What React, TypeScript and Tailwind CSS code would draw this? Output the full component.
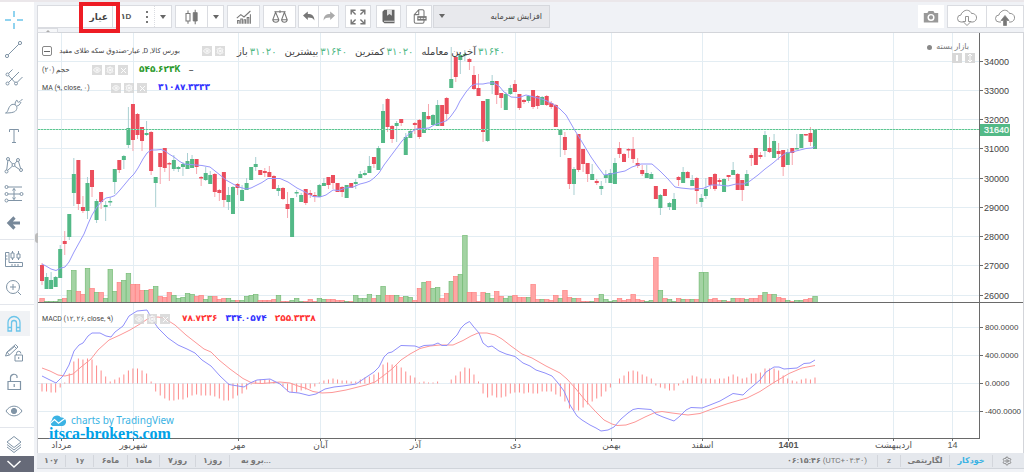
import type { ReactNode } from 'react'
import { Settings, Eye, X } from 'lucide-react'

type Direction = 'u' | 'd'
/** direction, high, body top, body bottom, low */
type Candle = [Direction, number, number, number, number]

const X0 = 42
const STEP = 4.547
const VOLUME_BASE = 302
const MACD_ZERO = 383.5

const xAt = (i: number) => X0 + i * STEP

const candles: Candle[] = [
  ['d', 263, 265, 281, 285], ['u', 273, 277, 289, 289], ['u', 272, 280, 289, 289], ['u', 276, 277, 287, 287],
  ['u', 245, 249, 278, 278], ['d', 231, 241, 244, 255], ['u', 214, 214, 237, 240], ['u', 158, 174, 193, 206],
  ['d', 160, 160, 204, 210], ['d', 196, 207, 211, 213], ['u', 177, 183, 211, 219], ['d', 170, 170, 187, 197],
  ['u', 199, 201, 220, 223], ['d', 192, 192, 202, 209], ['u', 201, 205, 207, 221], ['u', 197, 201, 202, 206],
  ['u', 169, 169, 182, 194], ['d', 160, 160, 170, 173], ['u', 155, 156, 160, 169], ['u', 107, 128, 145, 148],
  ['d', 104, 104, 140, 151], ['d', 113, 114, 135, 139], ['d', 127, 127, 141, 151], ['u', 121, 133, 135, 136],
  ['d', 131, 132, 171, 175], ['u', 177, 177, 183, 207], ['d', 153, 153, 167, 184], ['d', 148, 148, 168, 172],
  ['d', 162, 163, 164, 181], ['u', 155, 160, 169, 171], ['u', 166, 167, 169, 172], ['u', 162, 164, 167, 176],
  ['u', 153, 161, 169, 169], ['u', 155, 159, 168, 168], ['d', 159, 159, 167, 174], ['d', 176, 177, 178, 186],
  ['u', 167, 173, 180, 181], ['u', 171, 175, 184, 184], ['d', 173, 174, 192, 197], ['d', 189, 190, 193, 201],
  ['d', 172, 172, 200, 207], ['u', 187, 195, 202, 210], ['u', 186, 187, 214, 214], ['d', 183, 184, 188, 195],
  ['u', 185, 190, 201, 201], ['u', 178, 183, 190, 190], ['u', 167, 167, 180, 180], ['u', 157, 164, 167, 171],
  ['d', 170, 170, 175, 175], ['d', 168, 171, 173, 177], ['d', 166, 172, 177, 177], ['d', 175, 176, 189, 189],
  ['u', 185, 188, 191, 196], ['d', 187, 188, 199, 200], ['d', 192, 204, 209, 218], ['u', 198, 198, 237, 237],
  ['u', 190, 192, 193, 197], ['u', 193, 195, 202, 202], ['d', 189, 189, 203, 205], ['d', 190, 193, 195, 198],
  ['d', 192, 195, 196, 202], ['u', 184, 185, 197, 197], ['u', 178, 183, 186, 186], ['d', 177, 177, 185, 189],
  ['d', 175, 175, 183, 189], ['d', 183, 183, 192, 192], ['d', 186, 187, 192, 197], ['u', 185, 185, 198, 198],
  ['d', 183, 183, 188, 188], ['u', 179, 182, 184, 189], ['u', 171, 174, 178, 178], ['u', 170, 173, 175, 176],
  ['u', 156, 166, 173, 173], ['d', 157, 157, 164, 168], ['u', 146, 148, 170, 170], ['u', 104, 111, 143, 143],
  ['d', 98, 99, 127, 132], ['d', 125, 126, 139, 143], ['u', 121, 123, 126, 142], ['d', 119, 119, 123, 126],
  ['u', 133, 137, 155, 155], ['u', 130, 131, 138, 138], ['d', 122, 123, 125, 134], ['d', 119, 120, 137, 139],
  ['u', 112, 112, 133, 133], ['d', 104, 116, 119, 120], ['u', 114, 115, 125, 125], ['u', 100, 105, 126, 126],
  ['d', 105, 105, 126, 126], ['d', 97, 98, 114, 121], ['u', 47, 79, 88, 88], ['d', 57, 57, 77, 82],
  ['u', 53, 55, 60, 74], ['u', 50, 54, 55, 61], ['d', 58, 59, 62, 70], ['d', 66, 75, 89, 90],
  ['d', 74, 88, 96, 96], ['d', 101, 101, 132, 142], ['u', 99, 99, 141, 142], ['u', 75, 81, 85, 94],
  ['d', 81, 81, 95, 104], ['d', 93, 93, 98, 108], ['u', 92, 94, 110, 110], ['u', 85, 88, 94, 95],
  ['d', 80, 84, 92, 92], ['d', 94, 94, 108, 110], ['d', 99, 100, 102, 104], ['u', 95, 96, 101, 103],
  ['d', 90, 90, 107, 109], ['d', 95, 96, 106, 109], ['u', 96, 97, 105, 105], ['d', 95, 96, 105, 106],
  ['d', 101, 103, 107, 109], ['d', 104, 105, 127, 127], ['u', 129, 130, 135, 157], ['d', 132, 137, 150, 155],
  ['d', 158, 158, 184, 189], ['u', 167, 169, 184, 195], ['d', 134, 134, 170, 172], ['d', 149, 149, 164, 172],
  ['d', 163, 163, 174, 182], ['u', 164, 174, 180, 180], ['d', 179, 181, 183, 185], ['u', 181, 186, 189, 195],
  ['u', 170, 175, 178, 183], ['u', 169, 173, 183, 183], ['u', 158, 163, 184, 184], ['d', 142, 148, 154, 158],
  ['d', 153, 154, 162, 162], ['d', 148, 149, 150, 158], ['d', 137, 149, 159, 163], ['d', 158, 163, 166, 168],
  ['d', 165, 170, 174, 176], ['u', 165, 173, 178, 178], ['u', 172, 174, 179, 179], ['d', 186, 186, 199, 199],
  ['u', 194, 195, 208, 215], ['d', 189, 189, 196, 196], ['u', 202, 203, 207, 210], ['u', 193, 199, 210, 210],
  ['d', 176, 177, 180, 186], ['u', 167, 172, 183, 183], ['d', 171, 172, 178, 178], ['u', 175, 180, 186, 186],
  ['d', 177, 178, 191, 204], ['u', 194, 198, 202, 207], ['u', 178, 189, 196, 199], ['d', 177, 177, 185, 189],
  ['d', 173, 174, 189, 191], ['d', 178, 180, 182, 185], ['u', 178, 179, 192, 192], ['d', 175, 175, 177, 181],
  ['u', 162, 170, 175, 175], ['d', 173, 174, 190, 190], ['d', 180, 180, 190, 201], ['u', 170, 174, 186, 186],
  ['d', 153, 155, 158, 166], ['d', 148, 148, 165, 165], ['d', 152, 155, 157, 159], ['u', 131, 135, 151, 157],
  ['d', 137, 148, 152, 153], ['u', 134, 141, 158, 158], ['d', 143, 151, 154, 160], ['d', 150, 150, 167, 176],
  ['u', 149, 152, 165, 165], ['d', 148, 148, 153, 165], ['u', 134, 148, 149, 149], ['u', 134, 134, 148, 148],
  ['d', 134, 134, 135, 136], ['d', 127, 133, 142, 146], ['u', 130, 130, 149, 149],
]

const volumes = [
  4, 1, 1, 1, 3, 4, 12, 32, 11, 8, 34, 14, 10, 10, 4, 33, 11, 20, 22, 29,
  18, 18, 12, 12, 13, 16, 6, 5, 10, 7, 4, 5, 9, 8, 6, 7, 3, 6, 6, 3,
  4, 4, 2, 2, 2, 6, 7, 8, 2, 2, 2, 3, 7, 1, 1, 2, 4, 1, 1, 3,
  1, 4, 3, 3, 3, 2, 2, 1, 1, 7, 4, 4, 8, 4, 7, 16, 7, 7, 7, 5,
  6, 5, 2, 14, 20, 21, 14, 15, 4, 9, 21, 26, 28, 67, 10, 10, 1, 10, 9, 4,
  11, 6, 4, 6, 7, 5, 5, 5, 18, 3, 3, 3, 2, 7, 4, 12, 5, 4, 4, 1,
  1, 1, 4, 8, 3, 1, 2, 4, 2, 3, 8, 3, 2, 1, 2, 45, 12, 4, 3, 1,
  4, 3, 3, 3, 3, 30, 30, 3, 4, 2, 2, 1, 4, 4, 4, 3, 4, 4, 7, 10,
  8, 8, 5, 4, 2, 1, 2, 2, 3, 4, 6,
]

const histogram = [
  -8, -8, -9, -9, -4, 1, 10, 22, 25, 24, 25, 24, 18, 13, 7, 2, 4, 6, 9, 13,
  15, 15, 13, 10, 2, -8, -12, -15, -17, -17, -16, -16, -14, -12, -11, -12, -12, -12, -13, -15,
  -17, -17, -15, -12, -10, -6, -1, 3, 4, 4, 4, 2, 1, -3, -8, -9, -9, -7, -6, -5,
  -3, 1, 3, 4, 5, 4, 3, 3, 2, 2, 4, 6, 7, 9, 11, 19, 21, 19, 18, 16,
  12, 8, 6, 1, 2, 1, 1, 2, 0, 0, 4, 8, 12, 16, 15, 9, 2, -10, -14, -12,
  -14, -14, -13, -10, -9, -9, -10, -9, -10, -10, -8, -8, -8, -11, -13, -18, -25, -27, -27, -24,
  -21, -18, -15, -13, -8, -4, 0, 5, 8, 12, 13, 12, 9, 7, 5, -2, -4, -5, -7, -7,
  -2, 3, 5, 8, 7, 5, 5, 5, 4, 5, 5, 7, 9, 7, 5, 6, 10, 10, 11, 15,
  15, 15, 13, 8, 5, 3, 2, 4, 5, 4, 6,
]

const maLine =
  '42,264 46,266 51,269 56,270.5 61,268 65,267 69,262 74,252 79,243 84,234 88,224 92,215 97,207 102,201 106,198 111,197 115,195.5 120,190 125,184 130,178 134,174 138,168 143,159 147,153 151,150 156,150 161,149.5 165,151 169,154 174,157 179,161 184,164 190,164.5 202,165.5 210,167 215,171 220,175 226,180 233,184 239,187 246,189 251,188 257,185 262,182.5 268,178.5 280,178.5 288,182 297,188 305,192 313,196.5 320,197 326,195 333,190 339,190.5 345,188 353,187 360,184 366,182.5 370,181 374,178 379,173 384,165 390,157 396,149 402,141 408,134.5 416,129 429,128 434,125 440,123 447,120.5 451,116 456,109 460,101 466,92 471,86 476,84 483,84 488,83 494,83 499,86 504,92 511,97 519,97.5 526,95 534,97 542,99 547,101 553,104 560,109 566,115 570,122 574,129 579,137 585,147 591,157 598,167 604,175 611,174 620,172 625,171 632,167 641,164 652,164 660,171 668,179 675,187 681,188 691,189 703,188.5 711,185 718,185 728,186 736,184 744,184 750,181 758,175 765,169 773,163 780,157 786,153 792,152 800,150 806,148.5 812,148 815,146.5'

const macdLine =
  '42,376 56,383 63,376 69,365 74,351 79,345 83,343 88,336 92,333 100,333 106,336 111,337 115,332 123,326 129,316 137,311 147,310 152,319 158,328 168,338 178,345 187,349 195,353 202,360 211,366 220,376 229,384.5 238,386 244,387 250,383 257,380 270,379 280,384 289,392 299,393 309,395.5 316,394 325,389 334,387 343,386 356,384 365,378 374,372 379,367 384,357 388,353 392,352 401,345.5 415,346 419,347.5 424,345.5 433,345 438,343 442,345.5 447,345.5 453,339 457,335 461,328 465,324 469.5,321.5 473,326 479,333 483,343 488,347 492,346 499,351 506,354 515,356.5 523,363 530,366 536,370 545,373 552,376 558,383 564,391 570,405 577,416 582,420 590,425 596,428 601,431 608,430 614,427 621,419 628,413 633,409.5 638,408.5 651,409.5 656,414 663,417 674,421 680,416 686,410 691,407.5 702,408 710,405 720,401 733,393.5 743,395 747,391 753,386 760,380 766,372 774,367 779,367 784,369 797,368 804,363.5 810,363 815,360'

const signalLine =
  '42,368 50,371 58,375 65,376 73,374 81,367 91,359 98,350 109,340 120,335 130,330 140,324 149,318 158,317 164,318 175,325 186,335 195,342 204,349 211,352 219,360 230,369 243,378.5 252,383 262,383.5 280,382 290,383 298,386 305,388 313,391.5 322,393 332,392.5 346,390 356,387.5 366,385 375,382 383,376 392,369 401,360 410,354 420,348.5 430,346 440,345 453,345 463,340.5 471,336 478,333 487,333 495,335 502,339 511,346 522,354 532,358 546,366 560,373 567,379 576,389 585,400 595,411 604,420 612,424 617,425.5 626,425 635,422 645,417 655,412.5 662,411.5 672,413 688,415 700,413.5 712,409 728,403.5 747,398 760,391.5 773,383 789,373.5 802,368 815,365.5'

const priceTicks = [34000, 33000, 32000, 31000, 30000, 29000, 28000, 27000, 26000].map((value, i) => ({
  value,
  y: Math.round(60.7 + i * 29.25) + 0.5,
}))

const macdTicks = [
  { label: '800.0000', y: 327.5 },
  { label: '400.0000', y: 355.5 },
  { label: '0.0000', y: 383.5 },
  { label: '-400.0000', y: 411.5 },
]

const months = [
  { label: 'مرداد', x: 61.5 },
  { label: 'شهریور', x: 133.5 },
  { label: 'مهر', x: 238.5 },
  { label: 'آبان', x: 320.5 },
  { label: 'آذر', x: 415.5 },
  { label: 'دی', x: 515.5 },
  { label: 'بهمن', x: 611.5 },
  { label: 'اسفند', x: 702.5 },
  { label: '1401', x: 788.5, bold: true },
  { label: 'اردیبهشت', x: 893.5 },
  { label: '14', x: 952.5 },
]

const ranges = [
  { label: '۱۰y', width: 'w-[29px]' },
  { label: '۱y', width: 'w-7' },
  { label: 'ماه۶', width: 'w-[34px]', rtl: true },
  { label: 'ماه۱', width: 'w-8', rtl: true },
  { label: 'روز۷', width: 'w-9', rtl: true },
  { label: 'روز۱', width: 'w-[34px]', rtl: true },
]

const Chart = () => (
  <svg viewBox="38 33 985 420" className="block h-auto w-full" fontFamily="'Liberation Sans', 'DejaVu Sans', sans-serif">
    <rect x="38" y="33" width="985" height="420" fill="#fff" />
    <g stroke="#e3edf3">
      {priceTicks.map((t) => (
        <path key={t.value} d={`M38 ${t.y}H980`} />
      ))}
      {macdTicks.map((t) => (
        <path key={t.label} d={`M38 ${t.y}H980`} />
      ))}
      {months.map((m) => (
        <path key={m.x} d={`M${m.x} 33V438`} />
      ))}
    </g>

    {volumes.map((v, i) => {
      const up = candles[i][0] === 'u'
      return (
        <rect
          key={i}
          x={xAt(i) - 2.2}
          y={VOLUME_BASE - v + 0.5}
          width="4.5"
          height={v}
          fill={up ? '#a3d3a3' : '#ffa5a5'}
          stroke={up ? '#75bb75' : '#ff8080'}
          strokeWidth="0.7"
        />
      )
    })}

    {candles.map(([dir, high, top, bottom, low], i) => (
      <g key={i}>
        <path d={`M${xAt(i)} ${high}V${low}`} stroke={dir === 'u' ? '#a9cfd2' : '#f7a6ae'} />
        <rect
          x={xAt(i) - 2}
          y={top}
          width="4"
          height={Math.max(bottom - top, 1.5)}
          fill={dir === 'u' ? '#53b987' : '#eb4d5c'}
        />
      </g>
    ))}

    <path d="M38 129.5H980" stroke="#b4e3cc" />
    <path d="M38 129.5H980" stroke="#5cc791" strokeDasharray="2 1" />
    <polyline points={maLine} fill="none" stroke="#9797fb" />

    {histogram.map((v, i) => (
      <path key={i} d={`M${xAt(i)} ${MACD_ZERO}V${MACD_ZERO - v}`} stroke="#fd8b8b" />
    ))}
    <polyline points={signalLine} fill="none" stroke="#fd9797" />
    <polyline points={macdLine} fill="none" stroke="#9090fb" />

    <path d="M38 302.5H1023M38 438.5H980M979.5 33V439" stroke="#6a6a6a" />

    <g fill="#444">
      {priceTicks.map((t) => (
        <g key={t.value}>
          <path d={`M980 ${t.y}h3`} stroke="#6a6a6a" />
          <text x="984" y={t.y + 3} fontSize="9">{t.value}</text>
        </g>
      ))}
      {macdTicks.map((t) => (
        <g key={t.label}>
          <path d={`M980 ${t.y}h3`} stroke="#6a6a6a" />
          <text x="985" y={t.y + 2.5} fontSize="8">{t.label}</text>
        </g>
      ))}
    </g>
    <rect x="980" y="124" width="30" height="12" fill="#53b987" />
    <text x="984" y="133" fontSize="9" fill="#fff" stroke="#fff" strokeWidth="0.2">31640</text>

    <g fontSize="9" fill="#555" textAnchor="middle">
      {months.map((m) => (
        <g key={m.x}>
          <path d={`M${m.x} 439v2`} stroke="#6a6a6a" />
          <text x={m.x} y="448" fontWeight={m.bold ? 700 : 400}>{m.label}</text>
        </g>
      ))}
    </g>
  </svg>
)

const MiniButtons = ({ removable = true }: { removable?: boolean }) => {
  const style = 'flex size-[10px] items-center justify-center bg-[#d3d3d3]/80 text-white'
  return (
    <span className="flex shrink-0 gap-[3px]">
      <button type="button" aria-label="Hide" className={style}><Eye size={8} strokeWidth={2.5} /></button>
      <button type="button" aria-label="Settings" className={style}><Settings size={8} strokeWidth={3} /></button>
      {removable && (
        <button type="button" aria-label="Remove" className={style}><X size={9} strokeWidth={2.5} /></button>
      )}
    </span>
  )
}

const quotes = [
  { label: 'باز', value: '۳۱۰۲۰' },
  { label: 'بیشترین', value: '۳۱۶۴۰' },
  { label: 'کمترین', value: '۳۱۰۲۰' },
  { label: 'آخرین معامله', value: '۳۱۶۴۰' },
]

const PriceLegend = () => (
  <div className="absolute top-2 left-1 text-[7px] text-[#444]">
    <div className="flex h-5 items-center">
      <button type="button" aria-label="Collapse" className="flex size-[10px] shrink-0 items-center justify-center rounded-xs border border-[#888]">
        <span className="h-px w-1.5 bg-[#666]" />
      </button>
      <span dir="rtl" className="ml-1 w-[124px] text-right whitespace-nowrap">بورس کالا, D, عیار-صندوق سکه طلای مفید</span>
      <span className="ml-[22px]"><MiniButtons removable={false} /></span>
      <span className="ml-3 flex gap-2 text-[10px] whitespace-nowrap">
        {quotes.map((q) => (
          <span key={q.label} className="flex gap-0.5">
            <span>{q.label}</span>
            <span className="text-[#53b987]">{q.value}</span>
          </span>
        ))}
      </span>
    </div>
    <div className="flex h-[18px] items-center">
      <span className="w-[50px] whitespace-nowrap">حجم (۲۰)</span>
      <MiniButtons />
      <span className="ml-[11px] text-[9px] font-bold text-[#2c9a2c]">۵۴۵.۶۲۳K</span>
      <span className="ml-2 text-[10px]">−</span>
    </div>
    <div className="flex h-[18px] items-center">
      <span className="w-[69px] whitespace-nowrap">MA (۹, close, ۰)</span>
      <MiniButtons />
      <span className="ml-[11px] text-[9px] font-bold text-[#3333ff]">۳۱۰۸۷.۳۳۳۳</span>
    </div>
  </div>
)

const MacdLegend = () => (
  <div className="absolute top-[277px] left-1 flex h-[18px] items-center text-[7px] text-[#444]">
    <span className="w-[92px] whitespace-nowrap">MACD (۱۲, ۲۶, close, ۹)</span>
    <MiniButtons />
    <span className="ml-3 flex gap-2 text-[9px] font-bold">
      <span className="text-[#ff3333]">۷۸.۷۲۳۶</span>
      <span className="text-[#3333ff]">۳۳۴.۰۵۷۴</span>
      <span className="text-[#ff3333]">۲۵۵.۳۳۳۸</span>
    </span>
  </div>
)

const MarketStatus = () => (
  <div className="absolute top-2 right-12 flex flex-col items-end text-[8px] text-[#777]">
    <span dir="rtl" className="flex items-center gap-1 pr-1.5 leading-3">
      بازار بسته
      <span className="size-[5px] rounded-full bg-[#888]" />
    </span>
    <span className="flex gap-[3px]">
      <button type="button" aria-label="Scroll" className="flex size-[10px] items-center justify-center bg-[#d8d8d8]">
        <span className="h-[6px] w-[2px] bg-white" />
      </button>
      <button type="button" aria-label="Scale" className="flex size-[10px] items-center justify-center bg-[#d8d8d8]">
        <svg viewBox="0 0 10 10" className="size-[10px]" fill="none" stroke="#fff"><path d="M5 1v8M3 3l2-2 2 2M3 7l2 2 2-2" /></svg>
      </button>
    </span>
  </div>
)

const Watermark = () => (
  <div className="absolute bottom-[11px] left-[11px] text-[#3bb3e4]">
    <a href="#tradingview" className="flex items-center gap-[5px] font-['Noto_Sans'] text-[10px] leading-3">
      <svg viewBox="0 0 17 11" className="h-[11px] w-[17px]" fill="#3bb3e4">
        <path d="M3.500 11A3.500 3.500 0 0 1 3 5 5 5 0 0 1 12 2.500 4.300 4.300 0 0 1 13.500 11z" />
        <path d="M0 9.500 5.500 4.500l4 3.700L16.500 3" fill="none" stroke="#fff" strokeWidth="1.200" />
      </svg>
      charts by TradingView
    </a>
    <p className="font-['Liberation_Serif'] text-[16px] leading-4 font-bold text-[#00a2e8]">itsca-brokers.com</p>
  </div>
)

const Glyph = ({ children, className = 'size-5' }: { children: ReactNode; className?: string }) => (
  <svg viewBox="0 0 20 20" className={className} fill="none" stroke="currentColor" strokeWidth="1">
    {children}
  </svg>
)

const drawTools = [
  {
    name: 'Crosshair',
    icon: <path d="M10 1v6M10 13v6M1 10h6M13 10h6" stroke="#6cc5ea" strokeWidth="1.500" />,
  },
  {
    name: 'Trend line',
    icon: <><circle cx="3" cy="17" r="1.600" /><circle cx="16" cy="4" r="1.600" /><path d="M4.200 15.800 14.800 5.200" /></>,
  },
  {
    name: 'Pitchfork',
    icon: (
      <>
        <circle cx="3.500" cy="6.500" r="1.500" /><circle cx="3.500" cy="15.500" r="1.500" /><circle cx="12" cy="15.500" r="1.500" />
        <path d="M4.500 5.500 8.500 1.500M4.500 14.500 15 4M13 14.500 18.500 9M4.500 7.500 11 14.500" />
      </>
    ),
  },
  {
    name: 'Brush',
    icon: <path d="M1.500 16c3-.5 2.500-7 6.500-8.500 3-1 6 2 4.500 5-1 2.500-4 3.500-11 3.500zM11 8c0-3 1-4.500 2-5 0 2 1 3 3 1.500L18.500 2M12.500 9c2 0 3.500-1.500 4.500-4" />,
  },
  {
    name: 'Text',
    icon: <path d="M5.500 6V3.500h9V6M10 3.500v13M8 16.500h4" />,
  },
  {
    name: 'Pattern',
    icon: (
      <>
        <circle cx="4" cy="4" r="1.500" /><circle cx="14" cy="5" r="1.500" /><circle cx="9.500" cy="10" r="1.500" />
        <circle cx="2.500" cy="16.500" r="1.500" /><circle cx="17" cy="15" r="1.500" />
        <path d="M3.900 5.500 2.700 15M5 5l3.500 4M10.500 9l2.500-3M14.500 6.500 16.600 13.500M3.500 15.500 8.500 11M10.500 11l5 3.500" />
      </>
    ),
  },
  {
    name: 'Prediction',
    icon: (
      <>
        <circle cx="2.500" cy="3" r="1.500" /><circle cx="2.500" cy="10" r="1.500" /><circle cx="17.500" cy="10" r="1.500" /><circle cx="2.500" cy="16.500" r="1.500" />
        <path d="M4 3h14M4 10h12M4 16.500h14M10 4.500v11M8.500 6.500l1.500-2 1.500 2M8.500 13.500l1.500 2 1.500-2" />
      </>
    ),
  },
  {
    name: 'Arrow',
    icon: <path d="M16 10H6M10.500 4.500 5 10l5.500 5.500" strokeWidth="3.200" stroke="#778899" />,
  },
]

const measureTools = [
  {
    name: 'Measure',
    icon: <path d="M1.500 3.500h3.500v10h13.500v4h-17zM1.500 7h2M1.500 10h2M8 17v-2M11 17v-2M14 17v-2M8.500 2v2M8.500 9v2M7 4h3v5H7zM14.500 2v3M14.500 9v2M13 5h3v4h-3z" />,
  },
  {
    name: 'Zoom in',
    icon: <><circle cx="9" cy="9" r="6.500" /><path d="M6 9h6M9 6v6M14 14l3 3" /></>,
  },
]

const modeTools = [
  {
    name: 'Magnet',
    active: true,
    icon: <path d="M4 17V8.500a6 6 0 0 1 12 0V17h-3.500V9a2.500 2.500 0 0 0-5 0v8zM4 13.500h3.500M12.500 13.500H16" stroke="#6cc5ea" strokeWidth="1.300" />,
  },
  {
    name: 'Keep drawing',
    icon: <path d="M1.500 13 3 9l8.500-7.500L14 4 5.500 12zM3 9l2.500 3M10 3l2.500 2.500M4.500 8.500l6-5M11 12h7.500v6H11zM12.500 12v-1.500a2.200 2.200 0 0 1 4.400 0M14.700 14v2" />,
  },
  {
    name: 'Lock',
    icon: <path d="M4 9.500h12.500v8H4zM6.500 9.500V5.500a3.500 3.500 0 0 1 6.500-1.500v2M10.200 12v3" strokeWidth="1.200" />,
  },
  {
    name: 'Hide drawings',
    icon: <><path d="M2 10c4-6.500 12-6.500 16 0-4 6.500-12 6.500-16 0z" /><circle cx="10" cy="10" r="2.600" fill="currentColor" /></>,
  },
]

const ToolGroup = ({ tools }: { tools: { name: string; icon: ReactNode; active?: boolean }[] }) => (
  <div className="flex flex-col">
    {tools.map((tool) => (
      <button key={tool.name} type="button" aria-label={tool.name} className="flex h-[29px] items-center pr-1">
        <span className={tool.active ? 'flex h-[25px] w-full items-center bg-[#f0f2f5] pl-1' : 'flex pl-1'}>
          <Glyph>{tool.icon}</Glyph>
        </span>
      </button>
    ))}
  </div>
)

const Divider = () => <div className="mt-0.5 mb-1 h-px bg-[#e3e6ec]" />

const Sidebar = () => (
  <aside className="flex w-[34px] shrink-0 flex-col bg-white pt-[3px] text-[#8094a6]">
    <ToolGroup tools={drawTools} />
    <Divider />
    <ToolGroup tools={measureTools} />
    <Divider />
    <ToolGroup tools={modeTools} />
    <Divider />
    <button type="button" aria-label="Objects" className="flex h-6 items-center pl-1">
      <Glyph><path d="M10 2.500 17 8l-7 5.500L3 8zM3 10.500 10 16l7-5.500M3 13l7 5.500L17 13" /></Glyph>
    </button>
    <button type="button" aria-label="Expand" className="mt-auto flex h-4 items-center justify-center bg-[#666a78] pr-1.5 text-white">
      <svg viewBox="0 0 16 10" className="h-[10px] w-4" fill="none" stroke="currentColor" strokeWidth="1.500"><path d="M1.500 2 8 8l6.500-6" /></svg>
    </button>
  </aside>
)

const Caret = () => <span className="border-x-[3px] border-t-4 border-x-transparent border-t-[#666]" />

const box = 'flex h-[23px] shrink-0 items-center justify-center border border-[#dadce1] bg-white text-[#777]'

const Toolbar = () => (
  <header className="flex h-[30px] items-start bg-[#f0f2f6] pt-[3px]">
    <div className={`${box} w-[135px]`}>
      <input
        aria-label="Symbol"
        dir="rtl"
        defaultValue="عیار"
        className="h-full w-[75px] border-r border-[#dadce1] pr-1 text-[9px] font-bold text-[#444] outline-none"
      />
      <button type="button" className="w-[26px] font-['Liberation_Sans','DejaVu_Sans'] text-[8px] font-bold text-[#555]">۱D</button>
      <button type="button" aria-label="Intervals" className="flex h-full w-4 flex-col items-center justify-center gap-[3px] border-r border-dotted border-[#dadce1]">
        <span className="size-[2px] bg-[#777]" />
        <span className="size-[2px] bg-[#777]" />
        <span className="size-[2px] bg-[#777]" />
      </button>
      <button type="button" aria-label="More intervals" className="flex flex-1 justify-center"><Caret /></button>
    </div>

    <div className={`${box} ml-[3px] w-[49px]`}>
      <button type="button" aria-label="Candles" className="flex h-full w-8 items-center justify-center border-r border-[#dadce1]">
        <Glyph className="size-4">
          <path d="M5 2v3.500M5 15v3.500M2.500 5.500h5V15h-5zM14 1v18" strokeWidth="1.300" />
          <path d="M11.500 4.500h5V15h-5z" fill="currentColor" />
        </Glyph>
      </button>
      <button type="button" aria-label="Chart types" className="flex flex-1 justify-center"><Caret /></button>
    </div>

    <button type="button" aria-label="Indicators" className={`${box} ml-[3px] w-[33px]`}>
      <Glyph className="size-4">
        <path d="M2 18.500v-4h2v4M6 18.500v-6h2v6M10 18.500v-5h2v5M14 18.500v-8h2v8M18 18.500v-12M1 11.500 6 7l4 3 8-7.500" strokeWidth="1.300" />
      </Glyph>
    </button>
    <button type="button" aria-label="Compare" className={`${box} ml-[3px] w-[33px]`}>
      <Glyph className="size-4">
        <path d="M3 3.500h14M10 1.500V5M4.500 4 1 13.500h7.500zM15.500 4 12 13.500h7zM1 13.500c.5 4 7 4 7.500 0M12 13.500c.5 4 6.500 4 7 0" strokeWidth="1.300" />
      </Glyph>
    </button>

    <div className={`${box} ml-0.5 w-[41px]`}>
      <button type="button" aria-label="Undo" className="flex h-full flex-1 items-center justify-center border-r border-[#dadce1]">
        <Glyph className="size-3"><path d="M0 7.500 8 1v4c7 0 11 3 11 11-2-4-5-5-11-5v4z" fill="#777" stroke="none" /></Glyph>
      </button>
      <button type="button" aria-label="Redo" className="flex h-full flex-1 items-center justify-center">
        <Glyph className="size-3"><path d="M20 7.500 12 1v4C5 5 1 8 1 16c2-4 5-5 11-5v4z" fill="#aaa" stroke="none" /></Glyph>
      </button>
    </div>

    <button type="button" aria-label="Full screen" className={`${box} ml-1.5 w-[26px]`}>
      <Glyph className="size-4">
        <path d="M1.500 7V1.500H7M13 1.500h5.500V7M18.500 13v5.500H13M7 18.500H1.500V13M2 2l5 5M18 2l-5 5M18 18l-5-5M2 18l5-5" strokeWidth="1.800" />
      </Glyph>
    </button>
    <button type="button" aria-label="Save" className={`${box} ml-[5px] w-[25px]`}>
      <Glyph className="size-[15px]">
        <path d="M2 3.500 4.500 1H18v18H4.500L2 16.500z" fill="#666" stroke="none" />
        <path d="M8 1h6.500v8l-3.200-2.500L8 9zM4 15.500h14v1.500H4z" fill="#ddd" stroke="none" />
      </Glyph>
    </button>
    <button type="button" aria-label="Export CSV" className={`${box} ml-[5px] w-[26px]`}>
      <Glyph className="size-[15px]">
        <path d="M3 7.500V17a2 2 0 0 0 2 2h9a2 2 0 0 0 2-2V3a2 2 0 0 0-2-2H9zM9 1v6.500H3" strokeWidth="1.400" />
        <path d="M7 9.500h12.500v6H7z" fill="#777" stroke="none" />
        <path d="M8.500 12.500h2.500M12 12.500h2.500M15.500 12.500H18" stroke="#fff" strokeWidth="1.300" />
      </Glyph>
    </button>

    <div className="relative ml-px w-[117px]">
      <select
        aria-label="Event"
        dir="rtl"
        className="block h-[23px] w-full appearance-none border border-[#d6d8dd] bg-[#e8e9ed] pr-[7px] text-[8px] text-[#444]"
      >
        <option>افزایش سرمایه</option>
      </select>
      <span className="pointer-events-none absolute top-[9px] left-[6px] flex"><Caret /></span>
    </div>

    <button type="button" aria-label="Snapshot" className="ml-auto flex h-[23px] w-[26px] items-center justify-center bg-white">
      <Glyph className="size-4">
        <path d="M1 5h4.500L7 2.500h6L14.500 5H19v12H1z" fill="#999" stroke="none" />
        <circle cx="10" cy="10.500" r="3.500" stroke="#fff" strokeWidth="1.800" />
      </Glyph>
    </button>
    {[
      { name: 'Load', arrow: 'M8.500 9.500h3v5h2.500L10 18.500 6 14.500h2.500z', fill: '#fff' },
      { name: 'Upload', arrow: 'M8.500 18.500h3v-5h2.500L10 8.500 6 13.500h2.500z', fill: '#777' },
    ].map((c, i) => (
      <button key={c.name} type="button" aria-label={c.name} className={i === 0 ? `${box} ml-[3px] w-10` : `${box} w-[37px] border-l-0`}>
        <svg viewBox="0 0 20 20" className="size-5" fill="none" stroke="#888" strokeWidth="0.900">
          <path d="M6 15H4a3.500 3.500 0 0 1 0-7 3.500 3.500 0 0 1 2-3 5 5 0 0 1 8.500 1.500A4.300 4.300 0 0 1 16 15h-2" />
          <path d={c.arrow} fill={c.fill} />
        </svg>
      </button>
    ))}
  </header>
)

const Footer = () => (
  <footer className="flex h-4 items-center border-b border-[#d0d4da] bg-[#e5e8ed] text-[8px] font-bold text-[#777]">
    {ranges.map((r) => (
      <button
        key={r.label}
        type="button"
        dir={r.rtl ? 'rtl' : 'ltr'}
        className={`${r.width} h-3 shrink-0 border-r border-[#d3d6dc] leading-3`}
      >
        {r.label}
      </button>
    ))}
    <button type="button" className="ml-[11px] leading-3">برو به...</button>
    <span className="ml-auto pr-2.5 leading-3">
      ۰۶:۱۵:۴۶ <span className="font-normal">(UTC+۰۴:۳۰)</span>
    </span>
    <button type="button" className="h-3 w-[23px] border-l border-[#d3d6dc] leading-3 font-normal">z</button>
    <button type="button" className="h-3 w-[49px] border-l border-[#d3d6dc] leading-3">لگاریتمی</button>
    <button type="button" className="h-3 w-[43px] border-l border-[#d3d6dc] leading-3 text-[#3bb3e4]">خودکار</button>
    <button type="button" aria-label="Chart settings" className="flex h-3 w-8 items-center justify-center border-l border-[#d3d6dc] pr-1">
      <Settings size={10} />
    </button>
  </footer>
)

export default function App() {
  return (
    <div className="relative flex min-h-screen flex-col border-t-2 border-[#ebe7ea] bg-[#f0f2f6] font-['Roboto','DejaVu_Sans',sans-serif]">
      <div className="flex flex-1">
        <Sidebar />
        <main className="flex min-w-0 flex-1 flex-col pl-[3px]">
          <Toolbar />
          <section className="relative border border-b-0 border-[#d3d5da]">
            <Chart />
            <PriceLegend />
            <MacdLegend />
            <MarketStatus />
            <Watermark />
            <button type="button" aria-label="Hide toolbar" className="absolute -top-[5px] -left-px flex h-[5px] w-[21px] items-center justify-center border border-[#dadce1] bg-[#f6f7f9]">
              <span className="border-x-2 border-b-2 border-x-transparent border-b-[#aaa]" />
            </button>
            <span className="absolute top-[200px] -left-[3px] h-[10px] w-[3px] rounded-l-full bg-[#bbb]" />
          </section>
          <Footer />
        </main>
      </div>
      {/* highlight around the symbol field */}
      <div className="pointer-events-none absolute top-0 left-[79px] h-[31px] w-[41px] border-4 border-[#ee1c24]" />
    </div>
  )
}
